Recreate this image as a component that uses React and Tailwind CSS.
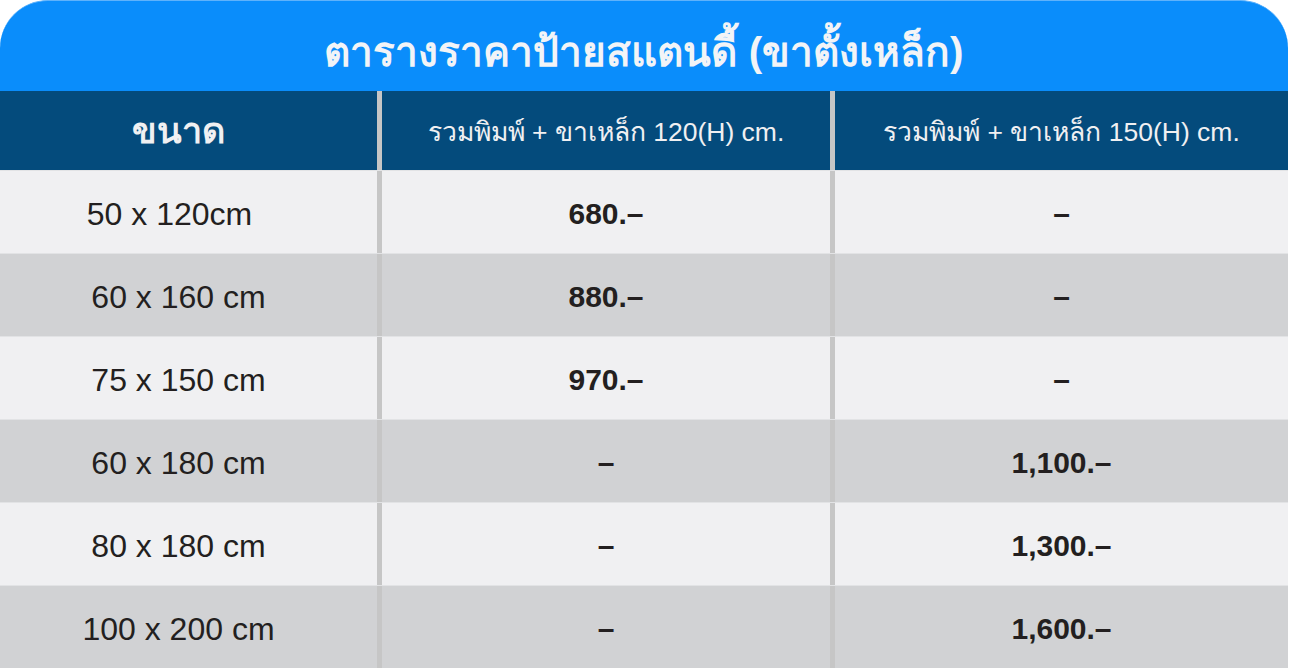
export default function App() {
  const rows = [
    { size: "50 x 120cm", a: "680.–", b: "–", bg: "bg-[#f0f0f2]", pad: "pr-[38px]" },
    { size: "60 x 160 cm", a: "880.–", b: "–", bg: "bg-[#d1d2d4]", pad: "pr-[20px]" },
    { size: "75 x 150 cm", a: "970.–", b: "–", bg: "bg-[#f0f0f2]", pad: "pr-[20px]" },
    { size: "60 x 180 cm", a: "–", b: "1,100.–", bg: "bg-[#d1d2d4]", pad: "pr-[20px]" },
    { size: "80 x 180 cm", a: "–", b: "1,300.–", bg: "bg-[#f0f0f2]", pad: "pr-[20px]" },
    { size: "100 x 200 cm", a: "–", b: "1,600.–", bg: "bg-[#d1d2d4]", pad: "pr-[20px]" },
  ];
  const font = { fontFamily: '"Liberation Sans", "Noto Sans", sans-serif' };
  return (
    <div className="w-[1289px] h-[670px] bg-white" style={font}>
      <div className="w-[1288px]">
        <div className="h-[91px] bg-[#0a8dfb] rounded-t-[48px] border-t border-[#5fb2fb] flex items-center justify-center">
          <span className="text-[40.5px] font-semibold text-[#f2f4f7] leading-none pt-[12px]">
            ตารางราคาป้ายสแตนดี้ (ขาตั้งเหล็ก)
          </span>
        </div>
        <div className="flex h-[79px] bg-[#044b7c] text-[#f0f0f2]">
          <div className="w-[377px] flex items-center justify-center pr-[20px] text-[36px] font-bold">ขนาด</div>
          <div className="w-[5px] bg-[#c6c6c6]"></div>
          <div className="w-[448px] flex items-center justify-center text-[26.5px] pt-[4px]">รวมพิมพ์ + ขาเหล็ก 120(H) cm.</div>
          <div className="w-[5px] bg-[#c6c6c6]"></div>
          <div className="flex-1 flex items-center justify-center text-[26.5px] pt-[4px]">รวมพิมพ์ + ขาเหล็ก 150(H) cm.</div>
        </div>
        {rows.map((r, i) => (
          <div key={i} className={`flex h-[83px] ${r.bg} text-[#231f20] border-t border-[#e2e3e5]`}>
            <div className={`w-[377px] flex items-center justify-center ${r.pad} text-[32px] pt-[3px]`}>{r.size}</div>
            <div className="w-[5px] bg-[#c6c6c6]"></div>
            <div className="w-[448px] flex items-center justify-center font-bold text-[30px] pt-[2px]">{r.a}</div>
            <div className="w-[5px] bg-[#c6c6c6]"></div>
            <div className="flex-1 flex items-center justify-center font-bold text-[30px] pt-[2px]">{r.b}</div>
          </div>
        ))}
      </div>
    </div>
  );
}
